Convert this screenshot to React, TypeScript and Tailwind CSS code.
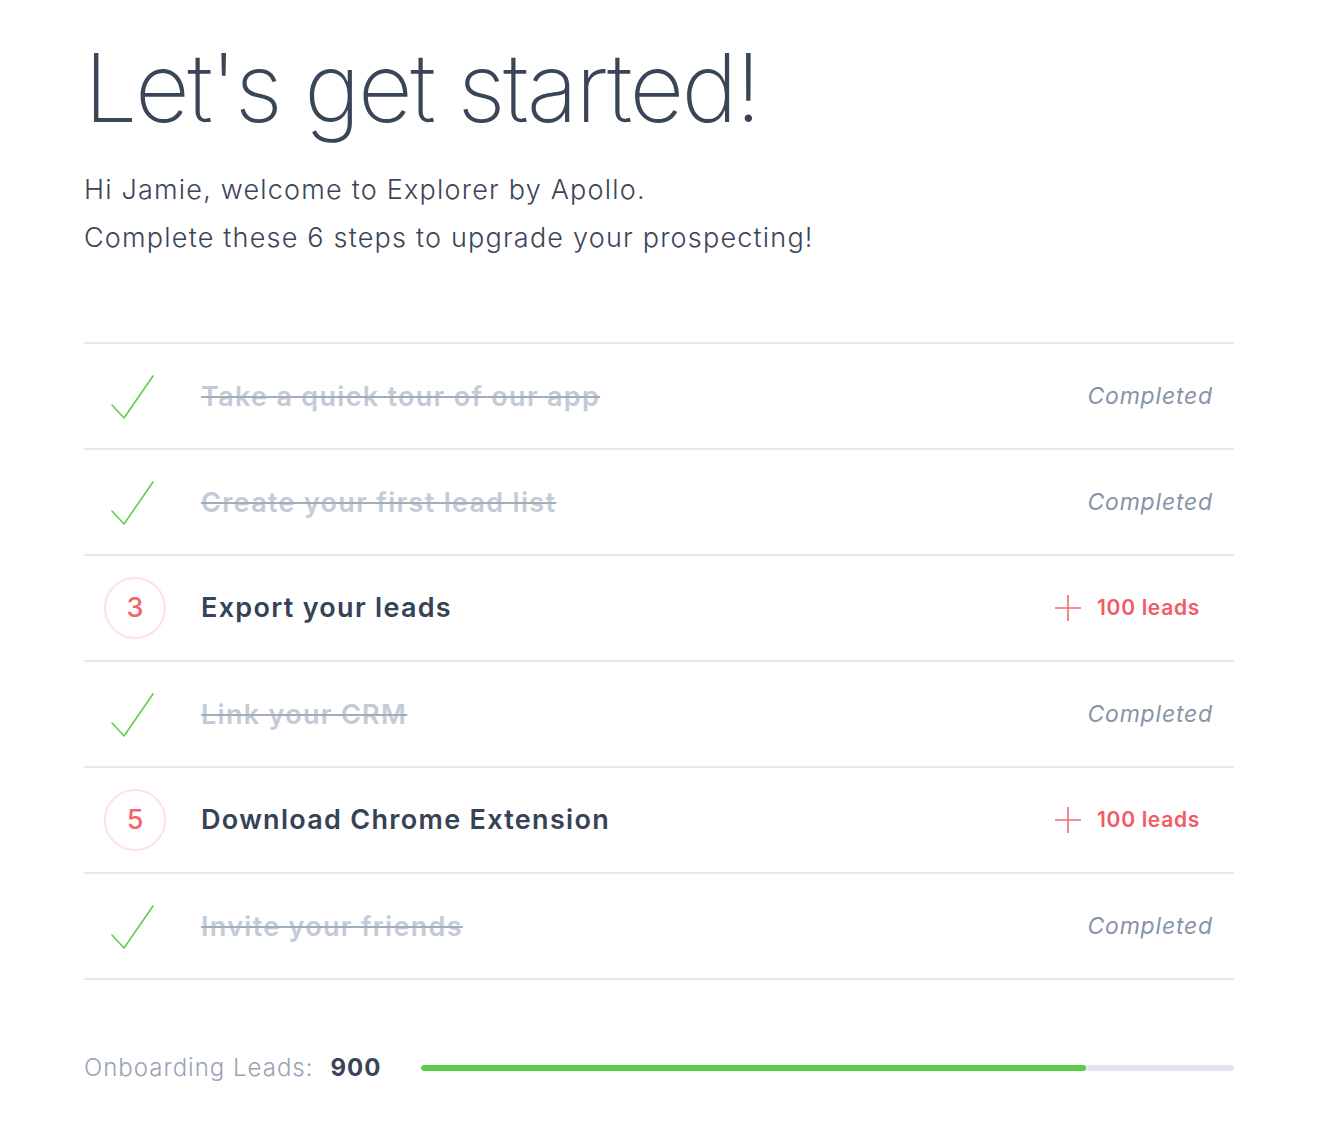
import React from "react";

type Step = { label: string; done: boolean; n: number };

const steps: Step[] = [
  { label: "Take a quick tour of our app", done: true, n: 1 },
  { label: "Create your first lead list", done: true, n: 2 },
  { label: "Export your leads", done: false, n: 3 },
  { label: "Link your CRM", done: true, n: 4 },
  { label: "Download Chrome Extension", done: false, n: 5 },
  { label: "Invite your friends", done: true, n: 6 },
];

function Check() {
  return (
    <svg width="44" height="46" viewBox="0 0 44 46" fill="none">
      <path d="M1 31 L13 44 L42 2" stroke="#5fcf4a" strokeWidth="1.6" strokeLinecap="round" strokeLinejoin="round" />
    </svg>
  );
}

function Plus() {
  return (
    <svg width="26" height="26" viewBox="0 0 26 26" fill="none">
      <path d="M13 0 V26 M0 13 H26" stroke="#f46a70" strokeWidth="1.6" />
    </svg>
  );
}

export default function App() {
  return (
    <div
      className="min-h-[1140px] w-[1324px] bg-white pl-[84px] pr-[90px] pt-[34px]"
      style={{ fontFamily: "Inter, 'Open Sans', sans-serif" }}
    >
      <h1 className="text-[95px] font-extralight leading-[108px] tracking-[-2.5px] text-[#3a4557]">
        Let's get started!
      </h1>
      <div className="mt-[24px] text-[27px] font-light leading-[48px] tracking-[1.2px] text-[#3a4557]">
        <p>Hi Jamie, welcome to Explorer by Apollo.</p>
        <p>Complete these 6 steps to upgrade your prospecting!</p>
      </div>
      <div className="mt-[80px] border-t-2 border-[#e5e9ef]">
        {steps.map((s) => (
          <div key={s.n} className="flex h-[106px] items-center border-b-2 border-[#e5e9ef]">
            <div className="flex w-[117px]">
              {s.done ? (
                <div className="pl-[27px] pt-[2px]"><Check /></div>
              ) : (
                <div className="ml-[20px] flex h-[62px] w-[62px] items-center justify-center rounded-full border-2 border-[#fde3e3] text-[27px] font-medium text-[#f4646d]">
                  {s.n}
                </div>
              )}
            </div>
            <div
              className={
                s.done
                  ? "flex-1 pt-[2px] text-[27px] font-semibold tracking-[1.3px] text-[#c3cbd6] line-through decoration-[#a3adba] decoration-2"
                  : "flex-1 text-[27px] font-semibold tracking-[1.3px] text-[#364255]"
              }
            >
              {s.label}
            </div>
            {s.done ? (
              <div className="pr-[21px] text-[23px] italic tracking-[0.8px] text-[#8794a8]">Completed</div>
            ) : (
              <div className="flex items-center gap-[16px] pr-[34px]">
                <Plus />
                <span className="text-[21px] font-semibold tracking-[0.7px] text-[#f25b64]">100 leads</span>
              </div>
            )}
          </div>
        ))}
      </div>
      <div className="mt-[70px] flex items-center">
        <span className="text-[24px] font-light tracking-[1px] text-[#98a3b4]">Onboarding Leads:</span>
        <span className="ml-[17px] text-[24px] font-bold tracking-[1px] text-[#3a4557]">900</span>
        <div className="ml-[40px] flex h-[6px] flex-1 overflow-hidden rounded-full bg-[#e1e6ee]">
          <div className="h-full rounded-full bg-[#5ecb48]" style={{ width: `${(900 / 1100) * 100}%` }} />
        </div>
      </div>
    </div>
  );
}
